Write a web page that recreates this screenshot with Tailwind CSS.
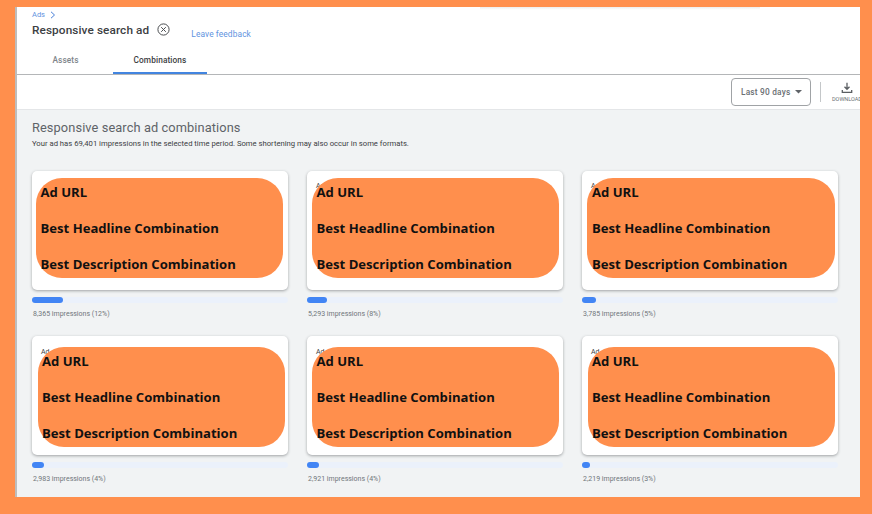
<!DOCTYPE html>
<html><head><meta charset="utf-8">
<script src="https://cdn.jsdelivr.net/npm/@tailwindcss/browser@4"></script>
</head>
<body class="m-0 bg-[#ff8f4d] w-[872px] h-[514px] overflow-hidden font-['Roboto',sans-serif]">
<div class="ml-[15px] mt-[7px] w-[845px] h-[490px] bg-white border-l-2 border-[#bdbdbd] flex flex-col overflow-hidden">
  <header class="h-[67px] relative shrink-0 pl-[15px] border-b border-[#b4b6b8] box-content">
    <div class="absolute left-[463px] top-0 w-[280px] h-[3px] bg-linear-to-b from-[#ececec] to-white"></div>
    <div class="flex items-center gap-[5px] h-[10px] pt-[3px] text-[7.500px] text-[#5f93e0] box-content"><span>Ads</span>
      <svg width="6" height="8" viewBox="0 0 6 8" fill="none" stroke="#4a80d8"><path d="M1 .8 4.500 4 1 7.200"/></svg></div>
    <div class="flex items-center -mt-[1px]">
      <h1 class="text-[11.800px] leading-[18px] font-medium text-[#3c4043] tracking-[0.1px]">Responsive search ad</h1>
      <svg class="ml-[8px]" width="13" height="13" viewBox="0 0 13 13" fill="none" stroke="#4a4d50" stroke-width="1"><circle cx="6.500" cy="6.500" r="5.600"/><path d="M4.200 4.200l4.600 4.600M8.800 4.200 4.200 8.800"/></svg>
      <a class="ml-[21px] mt-[9px] text-[8.400px] text-[#5f93e0] tracking-[0.1px]">Leave feedback</a>
    </div>
    <nav class="flex absolute left-[15px] bottom-0 h-[28px] text-[8.300px] tracking-[0.1px]">
      <div class="w-[66px] flex items-center justify-center text-[#80868b] pl-[1px] font-medium">Assets</div>
      <div class="ml-[15px] w-[94px] flex items-center justify-center text-[#3c4043] font-medium border-b-[2px] border-[#4285e0] pt-[2px]">Combinations</div>
    </nav>
  </header>
  <div class="h-[34px] shrink-0 flex items-center border-b border-[#e4e6e8] box-content relative">
    <div class="ml-[714px] w-[80px] shrink-0 h-[28px] border border-[#a0a3a6] rounded-[4px] flex items-center pl-[9px] gap-[5px] text-[8.300px] font-medium text-[#6b6f73] tracking-[0.2px]">
      <span class="whitespace-nowrap">Last 90 days</span>
      <svg class="shrink-0" width="7" height="4" viewBox="0 0 7 4" fill="#5f6368"><path d="M0 0h7L3.500 3.500z"/></svg>
    </div>
    <div class="ml-[9px] w-px h-[20px] shrink-0 bg-[#c4c7c9]"></div>
    <div class="ml-[11px] flex flex-col items-start w-[30px] shrink-0">
      <svg class="ml-[9px]" width="12" height="12" viewBox="0 0 12 12" fill="none" stroke="#5a5e62" stroke-width="1.300"><path d="M6 .8v6M3.500 4.800 6 7.300l2.500-2.500M1.300 8v2.300h9.400V8"/></svg>
      <span class="text-[5.500px] leading-[8px] text-[#6b6f73] mt-[1px] whitespace-nowrap">DOWNLOAD</span>
    </div>
  </div>
  <main class="flex-1 bg-[#f1f3f4] pl-[15px] pt-[10px]">
    <h2 class="text-[12.800px] leading-[16px] text-[#5f6368] tracking-[0.1px]">Responsive search ad combinations</h2>
    <p class="text-[7.680px] leading-[10px] mt-[3px] text-[#3c4043]">Your ad has 69,401 impressions in the selected time period. Some shortening may also occur in some formats.</p>
    <div class="grid grid-cols-[256px_256px_256px] gap-x-[19px] gap-y-[17px] mt-[22px]">

      <article>
        <div class="relative h-[119px] bg-white rounded-[5px] shadow-[0_1px_3px_rgba(60,64,67,0.45)]">
          <div class="absolute left-[4px] top-[7px] w-[247px] h-[100px] rounded-[26px] bg-[#ff8f4d]"></div>
          <div class="absolute left-[8.500px] top-[12px] text-[13.100px] leading-[18px] font-bold font-['Open_Sans',sans-serif] text-[#111] flex flex-col gap-[18px]"><span>Ad URL</span><span>Best Headline Combination</span><span>Best Description Combination</span></div>
        </div>
        <div class="mt-[7px] h-[6px] rounded-[3px] bg-[#ebf1fb]"><div class="h-full rounded-[3px] bg-[#4285f4]" style="width:12%"></div></div>
        <p class="mt-[6px] ml-[1px] text-[7px] leading-[10px] text-[#70757a]">8,365 impressions (12%)</p>
      </article>

      <article>
        <div class="relative h-[119px] bg-white rounded-[5px] shadow-[0_1px_3px_rgba(60,64,67,0.45)]">
          <span class="absolute left-[9px] top-[11px] text-[7px] leading-[9px] text-[#3c4043]">Ad</span>
          <div class="absolute left-[5px] top-[7px] w-[247px] h-[100px] rounded-[26px] bg-[#ff8f4d]"></div>
          <div class="absolute left-[9.500px] top-[12px] text-[13.100px] leading-[18px] font-bold font-['Open_Sans',sans-serif] text-[#111] flex flex-col gap-[18px]"><span>Ad URL</span><span>Best Headline Combination</span><span>Best Description Combination</span></div>
        </div>
        <div class="mt-[7px] h-[6px] rounded-[3px] bg-[#ebf1fb]"><div class="h-full rounded-[3px] bg-[#4285f4]" style="width:8%"></div></div>
        <p class="mt-[6px] ml-[1px] text-[7px] leading-[10px] text-[#70757a]">5,293 impressions (8%)</p>
      </article>

      <article>
        <div class="relative h-[119px] bg-white rounded-[5px] shadow-[0_1px_3px_rgba(60,64,67,0.45)]">
          <span class="absolute left-[9px] top-[11px] text-[7px] leading-[9px] text-[#3c4043]">Ad</span>
          <div class="absolute left-[5px] top-[7px] w-[248px] h-[100px] rounded-[26px] bg-[#ff8f4d]"></div>
          <div class="absolute left-[10px] top-[12px] text-[13.100px] leading-[18px] font-bold font-['Open_Sans',sans-serif] text-[#111] flex flex-col gap-[18px]"><span>Ad URL</span><span>Best Headline Combination</span><span>Best Description Combination</span></div>
        </div>
        <div class="mt-[7px] h-[6px] rounded-[3px] bg-[#ebf1fb]"><div class="h-full rounded-[3px] bg-[#4285f4]" style="width:5.500%"></div></div>
        <p class="mt-[6px] ml-[1px] text-[7px] leading-[10px] text-[#70757a]">3,785 impressions (5%)</p>
      </article>

      <article>
        <div class="relative h-[119px] bg-white rounded-[5px] shadow-[0_1px_3px_rgba(60,64,67,0.45)]">
          <span class="absolute left-[9px] top-[12px] text-[7px] leading-[9px] text-[#3c4043]">Ad</span>
          <div class="absolute left-[6px] top-[11px] w-[247px] h-[100px] rounded-[26px] bg-[#ff8f4d]"></div>
          <div class="absolute left-[10px] top-[16px] text-[13.100px] leading-[18px] font-bold font-['Open_Sans',sans-serif] text-[#111] flex flex-col gap-[18px]"><span>Ad URL</span><span>Best Headline Combination</span><span>Best Description Combination</span></div>
        </div>
        <div class="mt-[7px] h-[6px] rounded-[3px] bg-[#ebf1fb]"><div class="h-full rounded-[3px] bg-[#4285f4]" style="width:4.500%"></div></div>
        <p class="mt-[6px] ml-[1px] text-[7px] leading-[10px] text-[#70757a]">2,983 impressions (4%)</p>
      </article>

      <article>
        <div class="relative h-[119px] bg-white rounded-[5px] shadow-[0_1px_3px_rgba(60,64,67,0.45)]">
          <span class="absolute left-[9px] top-[12px] text-[7px] leading-[9px] text-[#3c4043]">Ad</span>
          <div class="absolute left-[5px] top-[11px] w-[247px] h-[100px] rounded-[26px] bg-[#ff8f4d]"></div>
          <div class="absolute left-[9.500px] top-[16px] text-[13.100px] leading-[18px] font-bold font-['Open_Sans',sans-serif] text-[#111] flex flex-col gap-[18px]"><span>Ad URL</span><span>Best Headline Combination</span><span>Best Description Combination</span></div>
        </div>
        <div class="mt-[7px] h-[6px] rounded-[3px] bg-[#ebf1fb]"><div class="h-full rounded-[3px] bg-[#4285f4]" style="width:4.500%"></div></div>
        <p class="mt-[6px] ml-[1px] text-[7px] leading-[10px] text-[#70757a]">2,921 impressions (4%)</p>
      </article>

      <article>
        <div class="relative h-[119px] bg-white rounded-[5px] shadow-[0_1px_3px_rgba(60,64,67,0.45)]">
          <span class="absolute left-[9px] top-[12px] text-[7px] leading-[9px] text-[#3c4043]">Ad</span>
          <div class="absolute left-[6px] top-[11px] w-[247px] h-[100px] rounded-[26px] bg-[#ff8f4d]"></div>
          <div class="absolute left-[10px] top-[16px] text-[13.100px] leading-[18px] font-bold font-['Open_Sans',sans-serif] text-[#111] flex flex-col gap-[18px]"><span>Ad URL</span><span>Best Headline Combination</span><span>Best Description Combination</span></div>
        </div>
        <div class="mt-[7px] h-[6px] rounded-[3px] bg-[#ebf1fb]"><div class="h-full rounded-[3px] bg-[#4285f4]" style="width:3.300%"></div></div>
        <p class="mt-[6px] ml-[1px] text-[7px] leading-[10px] text-[#70757a]">2,219 impressions (3%)</p>
      </article>

    </div>
  </main>
</div>
</body></html>
